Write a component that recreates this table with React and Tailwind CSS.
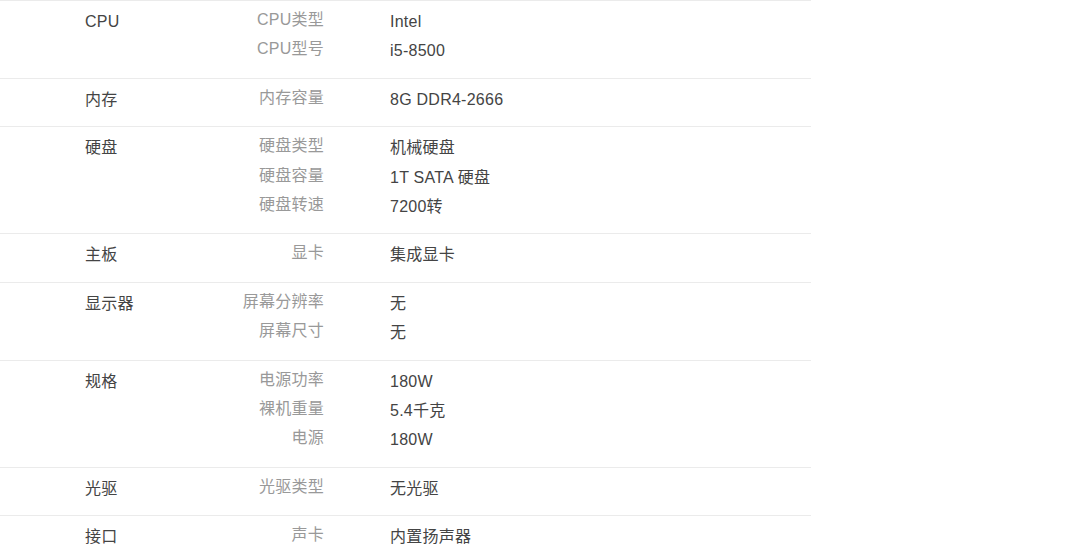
const specs = [
  {
    name: "CPU",
    items: [
      ["CPU类型", "Intel"],
      ["CPU型号", "i5-8500"],
    ],
  },
  { name: "内存", items: [["内存容量", "8G DDR4-2666"]] },
  {
    name: "硬盘",
    items: [
      ["硬盘类型", "机械硬盘"],
      ["硬盘容量", "1T SATA 硬盘"],
      ["硬盘转速", "7200转"],
    ],
  },
  { name: "主板", items: [["显卡", "集成显卡"]] },
  {
    name: "显示器",
    items: [
      ["屏幕分辨率", "无"],
      ["屏幕尺寸", "无"],
    ],
  },
  {
    name: "规格",
    items: [
      ["电源功率", "180W"],
      ["裸机重量", "5.4千克"],
      ["电源", "180W"],
    ],
  },
  { name: "光驱", items: [["光驱类型", "无光驱"]] },
  { name: "接口", items: [["声卡", "内置扬声器"]] },
];

const SpecRow = function ({ spec }) {
  return (
    <div className="flex border-t border-[#ebebeb] pt-[6px] pb-[12px]">
      <div className="w-[200px] shrink-0 pl-[85px] leading-[29.4px] text-[#444]">
        {spec.name}
      </div>
      <div className="w-[124px] shrink-0 -mt-[2px] text-right leading-[29.4px] text-[#999]">
        {spec.items.map(([label]) => (
          <div key={label}>{label}</div>
        ))}
      </div>
      <div className="ml-[66px] leading-[29.4px] text-[#444]">
        {spec.items.map(([label, value]) => (
          <div key={label}>{value}</div>
        ))}
      </div>
    </div>
  );
};

export default function App() {
  return (
    <div
      className="h-[558px] w-[1080px] overflow-hidden bg-white text-[16px] tracking-[0.25px]"
      style={{ fontFamily: '"Liberation Sans", Arial, "Noto Sans CJK SC", sans-serif' }}
    >
      <div className="w-[811px]">
        {specs.map((spec) => (
          <SpecRow key={spec.name} spec={spec} />
        ))}
      </div>
    </div>
  );
}
